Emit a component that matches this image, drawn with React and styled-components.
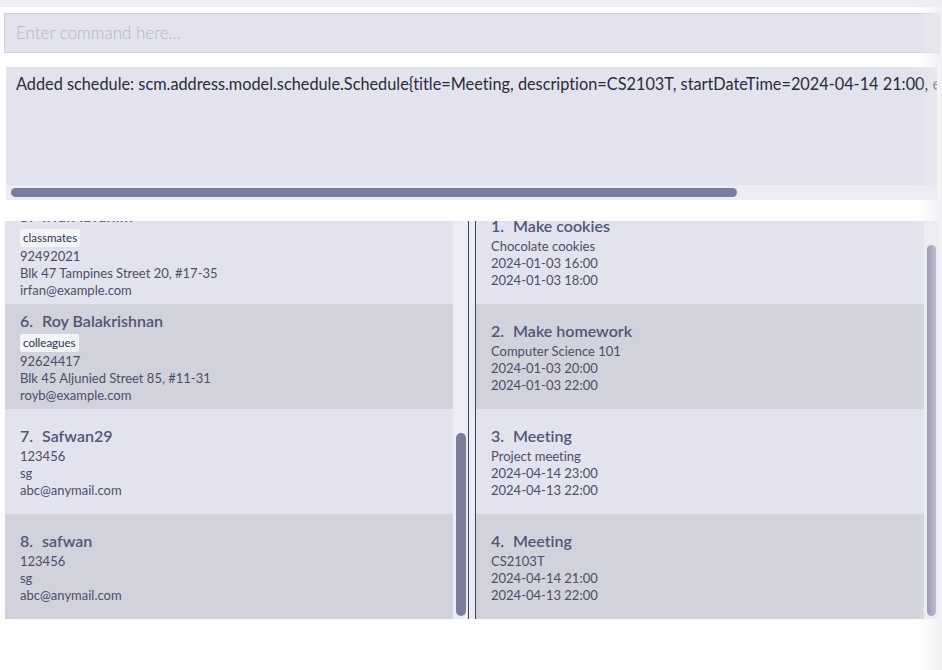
import React, { useLayoutEffect, useRef, useState } from "react";
import styled, { createGlobalStyle } from "styled-components";

const GlobalStyle = createGlobalStyle`
  html, body { margin: 0; padding: 0; background: #ffffff; }
  body { font-family: Lato, "Open Sans", sans-serif; font-variant-ligatures: none; }
  * { box-sizing: border-box; }
`;

const Page = styled.div`
  position: relative;
  width: 942px;
  height: 670px;
  overflow: hidden;
  display: flex;
  flex-direction: column;
  background: #ffffff;
`;

const MenuStrip = styled.div`
  height: 7px;
  background: #eeeef5;
`;

const CommandBox = styled.div`
  margin: 6px 2px 0 4px;
  height: 40px;
  border: 1px solid #d2d2de;
  background: #e3e3ef;
  display: flex;
  align-items: center;
  padding: 0 11px;
`;

const CommandInput = styled.input`
  flex: 1;
  border: none;
  outline: none;
  background: transparent;
  font-family: Lato, "Open Sans", sans-serif;
  font-weight: 300;
  font-size: 17px;
  color: #333;
  padding: 0 0 2px;
  &::placeholder { color: #b4b4c4; opacity: 1; }
`;

const ResultBox = styled.div`
  margin: 14px 5px 0 6px;
  height: 133px;
  background: #e3e3ef;
  display: flex;
  flex-direction: column;
`;

const ResultViewport = styled.div`
  flex: 1;
  overflow: hidden;
`;

const ResultText = styled.div`
  white-space: nowrap;
  display: inline-block;
  padding: 7px 12px 0 10px;
  font-size: 16.3px;
  color: #2b2b3a;
  line-height: 20px;
`;

const HTrack = styled.div`
  height: 15px;
  flex-shrink: 0;
  background: #ececf4;
  padding: 3px 0;
  display: flex;
`;

const HThumb = styled.div`
  height: 9px;
  border-radius: 5px;
  background: #7b7d9b;
`;

const ListsRow = styled.div`
  margin: 21px 0 0 5px;
  height: 398px;
  display: flex;
`;

const ListPane = styled.div`
  width: ${(p) => p.$w}px;
  height: 100%;
  display: flex;
  background: #ececf4;
`;

const ListViewport = styled.div`
  flex: 1;
  height: 100%;
  overflow: hidden;
`;

const VTrack = styled.div`
  width: ${(p) => p.$bar}px;
  flex-shrink: 0;
  height: 100%;
  background: #ececf4;
  padding: 0 2px 0 3px;
`;

const VThumb = styled.div`
  width: 100%;
  border-radius: 5px;
  background: #7b7d9b;
`;

const Divider = styled.div`
  width: 8px;
  height: 100%;
  border-left: 1px solid #3e4060;
  border-right: 1px solid #3e4060;
  background: #ececf4;
`;

const Cell = styled.div`
  height: 105px;
  padding: 0 15px;
  display: flex;
  flex-direction: column;
  justify-content: center;
  background: ${(p) => (p.$even ? "#d2d2dc" : "#e3e3ef")};
  color: #4b4e68;
`;

const Title = styled.div`
  display: flex;
  gap: 9px;
  font-size: 16px;
  font-weight: 600;
  color: #525675;
  line-height: 24px;
`;

const Tags = styled.div`
  display: flex;
  gap: 4px;
  margin: 1px 0;
`;

const Tag = styled.span`
  background: #f4f5f8;
  color: #30334f;
  font-size: 11.5px;
  line-height: 18px;
  padding: 0 3px;
  border-radius: 2px;
`;

const Line = styled.div`
  font-size: 13px;
  line-height: 17px;
  &:first-of-type { margin-top: 1px; }
`;

const EdgeShade = styled.div`
  position: absolute;
  top: 0;
  right: 0;
  width: 24px;
  height: 100%;
  pointer-events: none;
  background: linear-gradient(to right, rgba(240, 240, 243, 0), rgba(236, 236, 240, 0.75));
`;

const persons = [
  { name: "Alex Yeoh", tags: ["friends"], phone: "87438807", address: "Blk 30 Geylang Street 29, #06-40", email: "alexyeoh@example.com" },
  { name: "Bernice Yu", tags: ["colleagues", "friends"], phone: "99272758", address: "Blk 30 Lorong 3 Serangoon Gardens, #07-18", email: "berniceyu@example.com" },
  { name: "Charlotte Oliveiro", tags: ["neighbours"], phone: "93210283", address: "Blk 11 Ang Mo Kio Street 74, #11-04", email: "charlotte@example.com" },
  { name: "David Li", tags: ["family"], phone: "91031282", address: "Blk 436 Serangoon Gardens Street 26, #16-43", email: "lidavid@example.com" },
  { name: "Irfan Ibrahim", tags: ["classmates"], phone: "92492021", address: "Blk 47 Tampines Street 20, #17-35", email: "irfan@example.com" },
  { name: "Roy Balakrishnan", tags: ["colleagues"], phone: "92624417", address: "Blk 45 Aljunied Street 85, #11-31", email: "royb@example.com" },
  { name: "Safwan29", tags: [], phone: "123456", address: "sg", email: "abc@anymail.com" },
  { name: "safwan", tags: [], phone: "123456", address: "sg", email: "abc@anymail.com" },
];

const schedules = [
  { title: "Make cookies", desc: "Chocolate cookies", start: "2024-01-03 16:00", end: "2024-01-03 18:00" },
  { title: "Make homework", desc: "Computer Science 101", start: "2024-01-03 20:00", end: "2024-01-03 22:00" },
  { title: "Meeting", desc: "Project meeting", start: "2024-04-14 23:00", end: "2024-04-13 22:00" },
  { title: "Meeting", desc: "CS2103T", start: "2024-04-14 21:00", end: "2024-04-13 22:00" },
];

const RESULT =
  "Added schedule: scm.address.model.schedule.Schedule{title=Meeting, description=CS2103T, startDateTime=2024-04-14 21:00, endDateTime=2024-04-13 22:00}";

// Scrolls a list to its end and returns the thumb geometry for its track.
function useScrolledToEnd() {
  const ref = useRef(null);
  const [thumb, setThumb] = useState({ top: 0, len: 0 });
  useLayoutEffect(() => {
    const el = ref.current;
    if (!el) return;
    el.scrollTop = el.scrollHeight;
    const L = el.clientHeight;
    const C = el.scrollHeight;
    const S = el.scrollTop;
    setThumb({ top: (S * L) / C + 3, len: (L * L) / C - 6 });
  }, []);
  return [ref, thumb];
}

function PersonCell({ p, i }) {
  return (
    <Cell $even={i % 2 === 1}>
      <Title>
        <span>{i + 1}.</span>
        <span>{p.name}</span>
      </Title>
      {p.tags.length > 0 && (
        <Tags>
          {p.tags.map((t) => (
            <Tag key={t}>{t}</Tag>
          ))}
        </Tags>
      )}
      <Line>{p.phone}</Line>
      <Line>{p.address}</Line>
      <Line>{p.email}</Line>
    </Cell>
  );
}

function ScheduleCell({ s, i }) {
  return (
    <Cell $even={i % 2 === 1}>
      <Title>
        <span>{i + 1}.</span>
        <span>{s.title}</span>
      </Title>
      <Line>{s.desc}</Line>
      <Line>{s.start}</Line>
      <Line>{s.end}</Line>
    </Cell>
  );
}

export default function App() {
  const [leftRef, leftThumb] = useScrolledToEnd();
  const [rightRef, rightThumb] = useScrolledToEnd();
  const resRef = useRef(null);
  const [hThumb, setHThumb] = useState({ left: 5, len: 728 });

  useLayoutEffect(() => {
    const el = resRef.current;
    if (!el) return;
    const L = el.clientWidth;
    const C = el.scrollWidth;
    setHThumb({ left: 5, len: Math.max(20, (L * L) / C - 8) });
  }, []);

  return (
    <>
      <GlobalStyle />
      <Page>
        <MenuStrip />
        <CommandBox>
          <CommandInput placeholder="Enter command here..." />
        </CommandBox>
        <ResultBox>
          <ResultViewport ref={resRef}>
            <ResultText>{RESULT}</ResultText>
          </ResultViewport>
          <HTrack>
            <HThumb style={{ marginLeft: hThumb.left, width: hThumb.len }} />
          </HTrack>
        </ResultBox>
        <ListsRow>
          <ListPane $w={463}>
            <ListViewport ref={leftRef}>
              {persons.map((p, i) => (
                <PersonCell key={i} p={p} i={i} />
              ))}
            </ListViewport>
            <VTrack $bar={15}>
              <VThumb style={{ marginTop: leftThumb.top, height: leftThumb.len }} />
            </VTrack>
          </ListPane>
          <Divider />
          <ListPane $w={462}>
            <ListViewport ref={rightRef}>
              {schedules.map((s, i) => (
                <ScheduleCell key={i} s={s} i={i} />
              ))}
            </ListViewport>
            <VTrack $bar={14}>
              <VThumb style={{ marginTop: rightThumb.top, height: rightThumb.len }} />
            </VTrack>
          </ListPane>
        </ListsRow>
        <EdgeShade />
      </Page>
    </>
  );
}
